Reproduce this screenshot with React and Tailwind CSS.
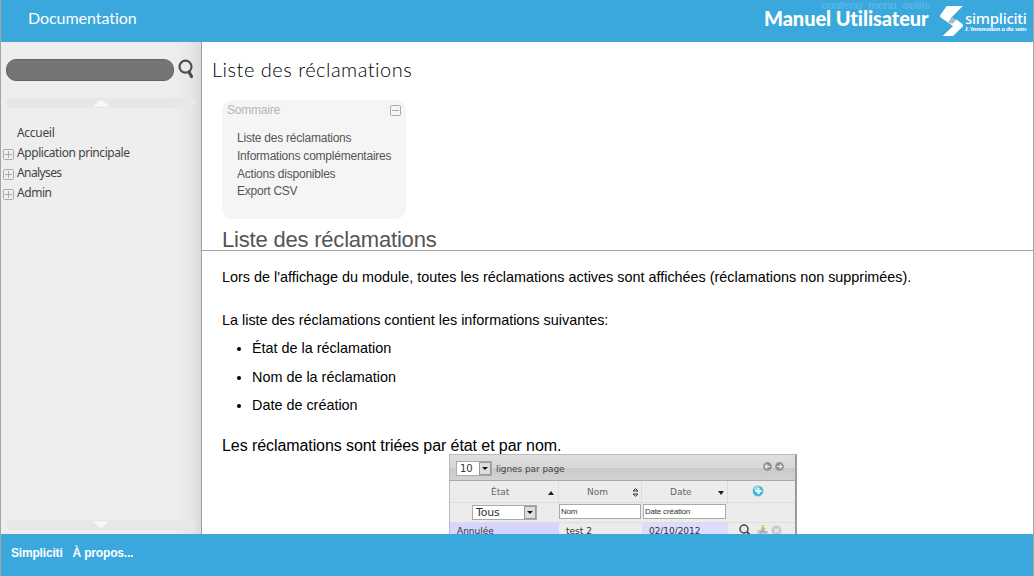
import React from "react";

const ARIAL = "font-['Liberation_Sans',Arial,sans-serif]";
const LATO = "font-['Lato',sans-serif]";
const VERDANA = "font-['DejaVu_Sans',Verdana,sans-serif]";

function Logo() {
  return (
    <svg className="block shrink-0" width="24" height="31" viewBox="0 0 24 31">
      <path d="M6.700 0H22.700L11.500 11.500L8.500 17L0.500 11.200Q-0.300 10 0.500 8.800Z" fill="#fff" />
      <path d="M11.500 11L18 15L13.500 19.500L8.200 16.700Z" fill="#aebbc6" />
      <path d="M16.500 13.500L22.500 18Q23.700 19.200 22.800 20.500L13 30H2.700L13 20L8.500 17L13 17.500Z" fill="#fff" />
    </svg>
  );
}

function Header() {
  return (
    <header className="flex h-[42px] shrink-0 items-start justify-between bg-[#3aa8dc] text-white">
      <div className={`${LATO} ml-[27px] mt-[7px] text-[16px] leading-[22px] tracking-[-0.050px] whitespace-nowrap`}>Documentation</div>
      <div className="relative flex">
        <div className={`${ARIAL} absolute -top-[1px] left-[57px] flex gap-[6px] text-[11.500px] font-bold leading-[13px] tracking-[-0.550px] text-[#56b6e4]`}>
          <span>contenu</span><span>menu</span><span>outils</span>
        </div>
        <div className={`${LATO} relative mt-[6px] w-[176px] whitespace-nowrap text-[20px] font-black leading-[24px] tracking-[-0.080px]`}>Manuel Utilisateur</div>
        <div className="mt-[6px] flex">
          <Logo />
          <div className="ml-[1px] mt-[3px] w-[68px] whitespace-nowrap">
            <div className="font-['Noto_Sans',sans-serif] text-[15px] font-medium leading-[19px] tracking-[-0.250px]">simpliciti</div>
            <div className="font-['Liberation_Serif',serif] text-[7px] font-bold italic leading-[3px] tracking-[-0.200px]">L&apos;innovation a du sens</div>
          </div>
        </div>
      </div>
    </header>
  );
}

function ScrollBar({ down = false }) {
  return (
    <div className="ml-[5px] flex h-[10px] w-[190px] shrink-0 items-center justify-center rounded-[5px] bg-[#e7e7e7]">
      <svg width="16" height="8" viewBox="0 0 16 8">
        <path d={down ? "M0 0.500H16L8 7.500Z" : "M0 7.500H16L8 0.500Z"} fill="#f9f9f9" />
      </svg>
    </div>
  );
}

function Box({ plus = false }) {
  return (
    <svg className="block shrink-0" width="11" height="11" viewBox="0 0 11 11" fill="none" stroke="#aaa">
      <rect x="0.500" y="0.500" width="10" height="10" rx="1" />
      <path d={plus ? "M2 5.500H9M5.500 2V9" : "M2 5.500H9"} />
    </svg>
  );
}

const menu = [
  ["Accueil", false, "tracking-[-0.300px]"],
  ["Application principale", true, "tracking-[-0.430px]"],
  ["Analyses", true, "tracking-[-0.600px]"],
  ["Admin", true, "tracking-[-0.450px]"],
];

function Sidebar() {
  return (
    <aside className="flex w-[201px] shrink-0 flex-col border-r border-[#a0a0a0] bg-[linear-gradient(to_right,#eeeeee_85%,#e8e8e8_94%,#dadada)]">
      <div className="flex h-[56px] shrink-0 pl-[5px] pt-[17px]">
        <div className="h-[22px] w-[168px] rounded-[10px] border border-[#656565] bg-[#757575]" />
        <svg className="ml-[3px]" width="17" height="21" viewBox="0 0 17 21" fill="none" stroke="#4d4d4d">
          <circle cx="8.500" cy="7.700" r="6" strokeWidth="2.200" />
          <path d="M12 13L14.500 17.500" strokeWidth="3.200" strokeLinecap="round" />
        </svg>
      </div>
      <ScrollBar />
      <nav className="mt-[14px] grow">
        {menu.map(([label, plus, track]) => (
          <div key={label} className="flex h-[20px] pl-[2px]">
            <div className="w-[14px] pt-[7px]">{plus && <Box plus />}</div>
            <span className={`font-['Noto_Sans',sans-serif] text-[12px] leading-[22px] whitespace-nowrap text-[#444] ${track}`}>{label}</span>
          </div>
        ))}
      </nav>
      <ScrollBar down />
      <div className="h-[4px] shrink-0" />
    </aside>
  );
}

function Summary() {
  return (
    <section className="ml-[20px] h-[119px] w-[184px] shrink-0 rounded-[10px] bg-[#f5f5f5]">
      <div className="flex justify-between pl-[5px] pr-[5px] pt-[3px]">
        <span className="text-[12px] leading-[14px] tracking-[-0.200px] text-[#b5b5b5]">Sommaire</span>
        <div className="pt-[2px]"><Box /></div>
      </div>
      <ul className="ml-[15px] mt-[13px] whitespace-nowrap text-[12px] leading-[17.800px] tracking-[-0.230px] text-[#555]">
        <li>Liste des réclamations</li>
        <li>Informations complémentaires</li>
        <li>Actions disponibles</li>
        <li>Export CSV</li>
      </ul>
    </section>
  );
}

function SelectBox({ text, wide = false }) {
  return (
    <div className={`flex shrink-0 justify-between border border-[#aaa] bg-white ${wide ? "h-[15px] w-[65px] text-[11px]" : "h-[15px] w-[36px] text-[10px]"}`}>
      <span className="pl-[3px] leading-[14px] tracking-[-0.200px] text-[#333]">{text}</span>
      <span className="flex w-[12px] items-center justify-center border border-[#999] bg-[#dedede]">
        <svg width="6" height="3" viewBox="0 0 6 3"><path d="M0 0H6L3 3Z" fill="#111" /></svg>
      </span>
    </div>
  );
}

function RoundArrow({ flip = false }) {
  return (
    <svg width="9" height="9" viewBox="0 0 9 9">
      <circle cx="4.500" cy="4.500" r="4.400" fill="#929292" />
      <path d={flip ? "M2 4.500H6.500M4.700 2.500L6.700 4.500L4.700 6.500" : "M7 4.500H2.500M4.300 2.500L2.300 4.500L4.300 6.500"} stroke="#eee" strokeWidth="1.200" fill="none" />
    </svg>
  );
}

function Listing() {
  const cols = "grid grid-cols-[109px_83px_86px_1fr]";
  return (
    <div className={`${VERDANA} ml-[247px] w-[348px] shrink-0 border-l border-r-2 border-t border-l-[#bbb] border-r-[#9b9b9b] border-t-[#bbb] bg-[#ececec] text-[9px] text-[#666]`}>
      <div className="flex h-[26px] items-center border-b border-[#aaa] bg-[linear-gradient(#dfdfdf_0%,#d8d8d8_50%,#c9c9c9_52%,#d2d2d2_100%)] pl-[6px] pr-[11px]">
        <div className="pt-[1px]"><SelectBox text="10" /></div>
        <span className="ml-[4px] grow pt-[3px] leading-[12px] tracking-[-0.080px] text-[#444]">lignes par page</span>
        <div className="flex gap-[3px] pb-[2px]"><RoundArrow /><RoundArrow flip /></div>
      </div>
      <div className={`${cols} h-[22px] border-b border-[#ddd] leading-[23px]`}>
        <div className="flex items-center border-r border-[#ddd] pl-[41px] pr-[4px]">
          <span className="grow">État</span>
          <svg width="6" height="4" viewBox="0 0 6 4"><path d="M0 4L3 0L6 4Z" fill="#222" /></svg>
        </div>
        <div className="flex items-center border-r border-[#ddd] pl-[28px] pr-[2px]">
          <span className="grow">Nom</span>
          <svg width="7" height="9" viewBox="0 0 7 9" fill="none" stroke="#333"><path d="M1 3L3.500 0.700L6 3ZM1 6L3.500 8.300L6 6Z" /></svg>
        </div>
        <div className="flex items-center border-r border-[#ddd] pl-[28px] pr-[3px]">
          <span className="grow">Date</span>
          <svg width="6" height="4" viewBox="0 0 6 4"><path d="M0 0H6L3 4Z" fill="#222" /></svg>
        </div>
        <div className="pl-[24px] pt-[4px]">
          <svg width="12" height="12" viewBox="0 0 12 12">
            <circle cx="6" cy="6" r="5.400" fill="#45b9da" />
            <path d="M1.500 4Q5 0 8 1.500Q5 3 4 6Z" fill="#a7e1f2" />
            <path d="M6.500 3V9M3.500 6H9.500" stroke="#fff" strokeWidth="2" />
          </svg>
        </div>
      </div>
      <div className={`${cols} h-[19px] ${ARIAL}`}>
        <div className={`${VERDANA} pl-[22px] pt-[2px]`}><SelectBox text="Tous" wide /></div>
        <div className="pt-[1px]"><div className="h-[15px] w-[82px] border border-[#aaa] bg-white pl-[1px] text-[8px] leading-[14px] tracking-[-0.200px] text-[#333]">Nom</div></div>
        <div className="pl-[1px] pt-[1px]"><div className="h-[15px] w-[83px] border border-[#aaa] bg-white pl-[1px] text-[8px] leading-[14px] tracking-[-0.200px] text-[#333]">Date création</div></div>
        <div />
      </div>
      <div className={`${cols} h-[20px] border-t border-[#ddd] leading-[16px] text-[#333]`}>
        <div className="bg-[#d5d5ff] pl-[7px]">Annulée</div>
        <div className="pl-[7px]">test 2</div>
        <div className="bg-[#dcdcff] pl-[7px] tracking-[-0.050px]">02/10/2012</div>
        <div className="flex gap-[5px] pl-[11px] pt-[1px]">
          <svg width="12" height="12" viewBox="0 0 12 12" fill="none" stroke="#444"><circle cx="5" cy="5" r="4" strokeWidth="1.500" /><path d="M8 8L11 11" strokeWidth="2" /></svg>
          <svg width="12" height="12" viewBox="0 0 12 12"><path d="M1 6H9L11 10L2 11Z" fill="#c6c9c7" /><path d="M4 9L9 4M7 8H12" stroke="#99a" strokeWidth="1.200" /><path d="M5.500 6L7.500 1" stroke="#eeae2b" strokeWidth="1.600" /></svg>
          <svg className="-ml-[2px]" width="11" height="12" viewBox="0 0 11 12"><circle cx="5.500" cy="6.500" r="5" fill="#c8c8c8" /><path d="M3.500 4.500L7.500 8.500M7.500 4.500L3.500 8.500" stroke="#eee" strokeWidth="1.300" /></svg>
        </div>
      </div>
    </div>
  );
}

function Content() {
  return (
    <main className="flex min-w-0 grow flex-col overflow-hidden bg-white text-black">
      <h1 className={`${LATO} ml-[10px] h-[58px] shrink-0 pt-[14px] whitespace-nowrap text-[20px] font-light leading-[26px] tracking-[0.500px]`}>Liste des réclamations</h1>
      <Summary />
      <h2 className="h-[32px] shrink-0 border-b border-[#a0a0a0] pl-[20px] pt-[8px] whitespace-nowrap text-[22px] leading-[25px] tracking-[-0.200px] text-[#555]">Liste des réclamations</h2>
      <div className="shrink-0 pl-[20px] text-[14.400px] whitespace-nowrap">
        <p className="mt-[17px] leading-[18px]">Lors de l&apos;affichage du module, toutes les réclamations actives sont affichées (réclamations non supprimées).</p>
        <p className="mt-[25px] leading-[18px]">La liste des réclamations contient les informations suivantes:</p>
        <ul className="mt-[5px] list-disc pl-[30px] leading-[28.500px]">
          <li>État de la réclamation</li>
          <li>Nom de la réclamation</li>
          <li>Date de création</li>
        </ul>
        <p className="mt-[16.500px] h-[18px] text-[16px] leading-[20px] tracking-[-0.080px]">Les réclamations sont triées par état et par nom.</p>
      </div>
      <Listing />
    </main>
  );
}

export default function App() {
  return (
    <div className={`${ARIAL} flex h-[576px] w-[1034px] flex-col overflow-hidden border-x border-[#a5a5a5]`}>
      <Header />
      <div className="flex h-[492px] shrink-0 overflow-hidden">
        <Sidebar />
        <Content />
      </div>
      <footer className="flex h-[42px] shrink-0 gap-[10px] bg-[#3aa8dc] pl-[10px] pt-[10px] text-[12px] font-bold leading-[18px] tracking-[-0.180px] text-white">
        <span>Simpliciti</span>
        <span>À propos...</span>
      </footer>
    </div>
  );
}
